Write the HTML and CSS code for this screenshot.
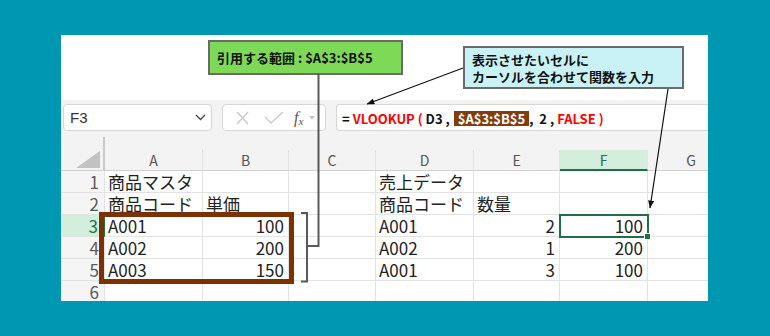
FILE: index.html
```html
<!DOCTYPE html>
<html lang="ja">
<head>
    <meta charset="UTF-8">
    <meta name="viewport" content="width=device-width, initial-scale=1.0">
    <title>VLOOKUP 関数の使い方</title>
    <link rel="stylesheet" href="styles.css">
</head>
<body>
    <div class="sheet">
        <div class="top-space"></div>

        <div class="toolbar">
            <div class="formula-row">
                <div class="name-box">
                    <span>F3</span>
                    <svg class="chevron" width="11" height="7" viewBox="0 0 11 7"><polyline points="1,1 5.5,5.5 10,1" fill="none" stroke="#444" stroke-width="1.3"/></svg>
                </div>
                <div class="fx-box">
                    <svg class="icon-x" width="13" height="14" viewBox="0 0 13 14"><path d="M1 1 L12 13 M12 1 L1 13" stroke="#c4c4c4" stroke-width="1.2" fill="none"/></svg>
                    <svg class="icon-check" width="20" height="13" viewBox="0 0 20 13"><polyline points="1,6 7,12 19,1" fill="none" stroke="#c4c4c4" stroke-width="1.2"/></svg>
                    <span class="fx">f<sub>x</sub></span>
                    <svg class="icon-down" width="6" height="4" viewBox="0 0 6 4"><polygon points="0,0 6,0 3,4" fill="#c8c8c8"/></svg>
                </div>
                <div class="formula-box">
                    <span class="formula-text">= <span class="fn">VLOOKUP (</span> D3 ,<span class="ref">$A$3:$B$5</span>,  2 , <span class="fn">FALSE )</span></span>
                </div>
            </div>
            <div class="splitter-row"><span class="splitter"></span></div>
        </div>

        <div class="grid">
            <div class="hd corner"><svg width="24" height="17" viewBox="0 0 24 17"><polygon points="24,0 24,17 0,17" fill="#c2c2c2"/></svg></div>
            <div class="hd">A</div>
            <div class="hd">B</div>
            <div class="hd">C</div>
            <div class="hd">D</div>
            <div class="hd">E</div>
            <div class="hd hd-sel">F</div>
            <div class="hd">G</div>

            <div class="rh">1</div>
            <div class="c">商品マスタ</div>
            <div class="c"></div>
            <div class="c"></div>
            <div class="c">売上データ</div>
            <div class="c"></div>
            <div class="c"></div>
            <div class="c"></div>

            <div class="rh">2</div>
            <div class="c">商品コード</div>
            <div class="c">単価</div>
            <div class="c"></div>
            <div class="c">商品コード</div>
            <div class="c">数量</div>
            <div class="c"></div>
            <div class="c"></div>

            <div class="rh rh-sel">3</div>
            <div class="c">A001</div>
            <div class="c num">100</div>
            <div class="c"></div>
            <div class="c">A001</div>
            <div class="c num">2</div>
            <div class="c num active">100</div>
            <div class="c"></div>

            <div class="rh">4</div>
            <div class="c">A002</div>
            <div class="c num">200</div>
            <div class="c"></div>
            <div class="c">A002</div>
            <div class="c num">1</div>
            <div class="c num">200</div>
            <div class="c"></div>

            <div class="rh">5</div>
            <div class="c">A003</div>
            <div class="c num">150</div>
            <div class="c"></div>
            <div class="c">A001</div>
            <div class="c num">3</div>
            <div class="c num">100</div>
            <div class="c"></div>

            <div class="rh">6</div>
            <div class="c"></div>
            <div class="c"></div>
            <div class="c"></div>
            <div class="c"></div>
            <div class="c"></div>
            <div class="c"></div>
            <div class="c"></div>
        </div>

        <!-- annotations -->
        <div class="range-box"></div>
        <div class="callout callout-green">引用する範囲 : $A$3:$B$5</div>
        <div class="callout callout-cyan">表示させたいセルに<br>カーソルを合わせて関数を入力</div>
        <svg class="leaders" width="647" height="266" viewBox="0 0 647 266">
            <defs>
                <marker id="tip" markerWidth="8" markerHeight="6" refX="7.5" refY="3" orient="auto" markerUnits="userSpaceOnUse">
                    <polygon points="0,0 8,3 0,6" fill="#111"/>
                </marker>
            </defs>
            <path d="M240 178 H246 V246.5 H240" fill="none" stroke="#595959" stroke-width="2"/>
            <path d="M246 211 H257.5 V39" fill="none" stroke="#595959" stroke-width="2"/>
            <line x1="402" y1="33" x2="306" y2="69" stroke="#111" stroke-width="1.2" marker-end="url(#tip)"/>
            <line x1="607" y1="54" x2="589" y2="173" stroke="#111" stroke-width="1.2" marker-end="url(#tip)"/>
        </svg>
    </div>
</body>
</html>
```

FILE: styles.css
```css
body {
    margin: 0;
    padding: 35px 0 0 61px;
    height: 336px;
    box-sizing: border-box;
    overflow: hidden;
    background-color: #0097b2;
    font-family: "Noto Sans CJK JP", "Noto Sans", sans-serif;
    color: #222;
}
.sheet {
    position: relative;
    width: 647px;
    height: 266px;
    background-color: #fff;
    overflow: hidden;
}
.top-space {
    height: 65px;
}
.toolbar {
    background-color: #f3f3f3;
    height: 50px;
}
.formula-row {
    display: flex;
    gap: 10px;
    padding: 4px 0 0 2px;
    height: 27px;
}
.name-box, .fx-box, .formula-box {
    flex-shrink: 0;
    box-sizing: border-box;
    height: 27px;
    background-color: #fff;
    border: 1px solid #d6d6d6;
    border-radius: 4px;
    display: flex;
    align-items: center;
}
.name-box {
    width: 149px;
    padding: 0 5px 0 6px;
    font-family: "Liberation Sans", Arial, sans-serif;
    font-size: 15px;
    color: #333;
}
.chevron {
    margin-left: auto;
}
.fx-box {
    width: 104px;
    padding-left: 13px;
}
.icon-check {
    margin-left: 15px;
}
.fx {
    margin-left: 10px;
    font-family: "Liberation Serif", serif;
    font-style: italic;
    font-size: 16px;
    color: #555;
}
.fx sub {
    font-size: 11px;
    vertical-align: -2px;
}
.icon-down {
    margin-left: 6px;
}
.formula-box {
    width: 400px;
    border-right: none;
    border-radius: 4px 0 0 4px;
    padding: 2px 0 0 5px;
}
.formula-text {
    font-size: 13px;
    font-weight: bold;
    white-space: pre;
    color: #111;
}
.fn {
    color: #f00;
}
.ref {
    display: inline-block;
    line-height: 15px;
    padding: 0 4px;
    margin-left: 4px;
    background-color: #843c0c;
    color: #fff;
}
.splitter-row {
    height: 19px;
    display: flex;
    align-items: flex-end;
}
.splitter {
    display: block;
    width: 2px;
    height: 13px;
    margin-left: 42px;
    background-color: #c9c9c9;
}
.grid {
    display: grid;
    grid-template-columns: 44px 98px 86px 87px 98px 86px 88px 87px;
    grid-template-rows: 21px repeat(6, 22px);
}
.grid > div {
    box-sizing: border-box;
    border-right: 1px solid #e2e2e2;
    border-bottom: 1px solid #e2e2e2;
    white-space: nowrap;
}
.hd {
    background-color: #f3f3f3;
    border-bottom-color: #d2d2d2 !important;
    text-align: center;
    font-size: 14px;
    line-height: 20px;
    color: #555;
}
.corner {
    display: flex;
    justify-content: flex-end;
    align-items: flex-end;
    padding: 0 3px 2px 0;
    border-right: 2px solid #c9c9c9 !important;
}
.hd-sel {
    background-color: #d3eedd;
    border-bottom: 2px solid #1e7145 !important;
    color: #1e7145;
}
.rh {
    background-color: #f5f5f5;
    text-align: right;
    padding-right: 5px;
    font-size: 17px;
    line-height: 21px;
    color: #5a5a5a;
}
.rh-sel {
    background-color: #d3eedd;
    border-right: 2px solid #1e7145 !important;
    color: #1e7145;
}
.c {
    padding: 0 3px;
    font-size: 17px;
    line-height: 21px;
    color: #222;
}
.num {
    text-align: right;
    padding-right: 4px;
}
.active {
    position: relative;
    outline: 2px solid #1e7145;
    outline-offset: -1px;
}
.active::after {
    content: "";
    position: absolute;
    right: -4px;
    bottom: -4px;
    width: 5px;
    height: 5px;
    background-color: #1e7145;
    border: 1px solid #fff;
}
.range-box {
    position: absolute;
    left: 38px;
    top: 177px;
    width: 195px;
    height: 72px;
    box-sizing: border-box;
    border: 5px solid #7c3200;
}
.callout {
    position: absolute;
    box-sizing: border-box;
    display: flex;
    align-items: center;
    padding-left: 7px;
    border: 2px solid #6a6a6a;
    font-size: 13px;
    font-weight: bold;
    line-height: 17px;
    color: #111;
}
.callout-green {
    left: 147px;
    top: 5px;
    width: 195px;
    height: 35px;
    background-color: #7ed957;
}
.callout-cyan {
    left: 402px;
    top: 11px;
    width: 221px;
    height: 43px;
    background-color: #c8f2f5;
}
.leaders {
    position: absolute;
    left: 0;
    top: 0;
    pointer-events: none;
}
```
